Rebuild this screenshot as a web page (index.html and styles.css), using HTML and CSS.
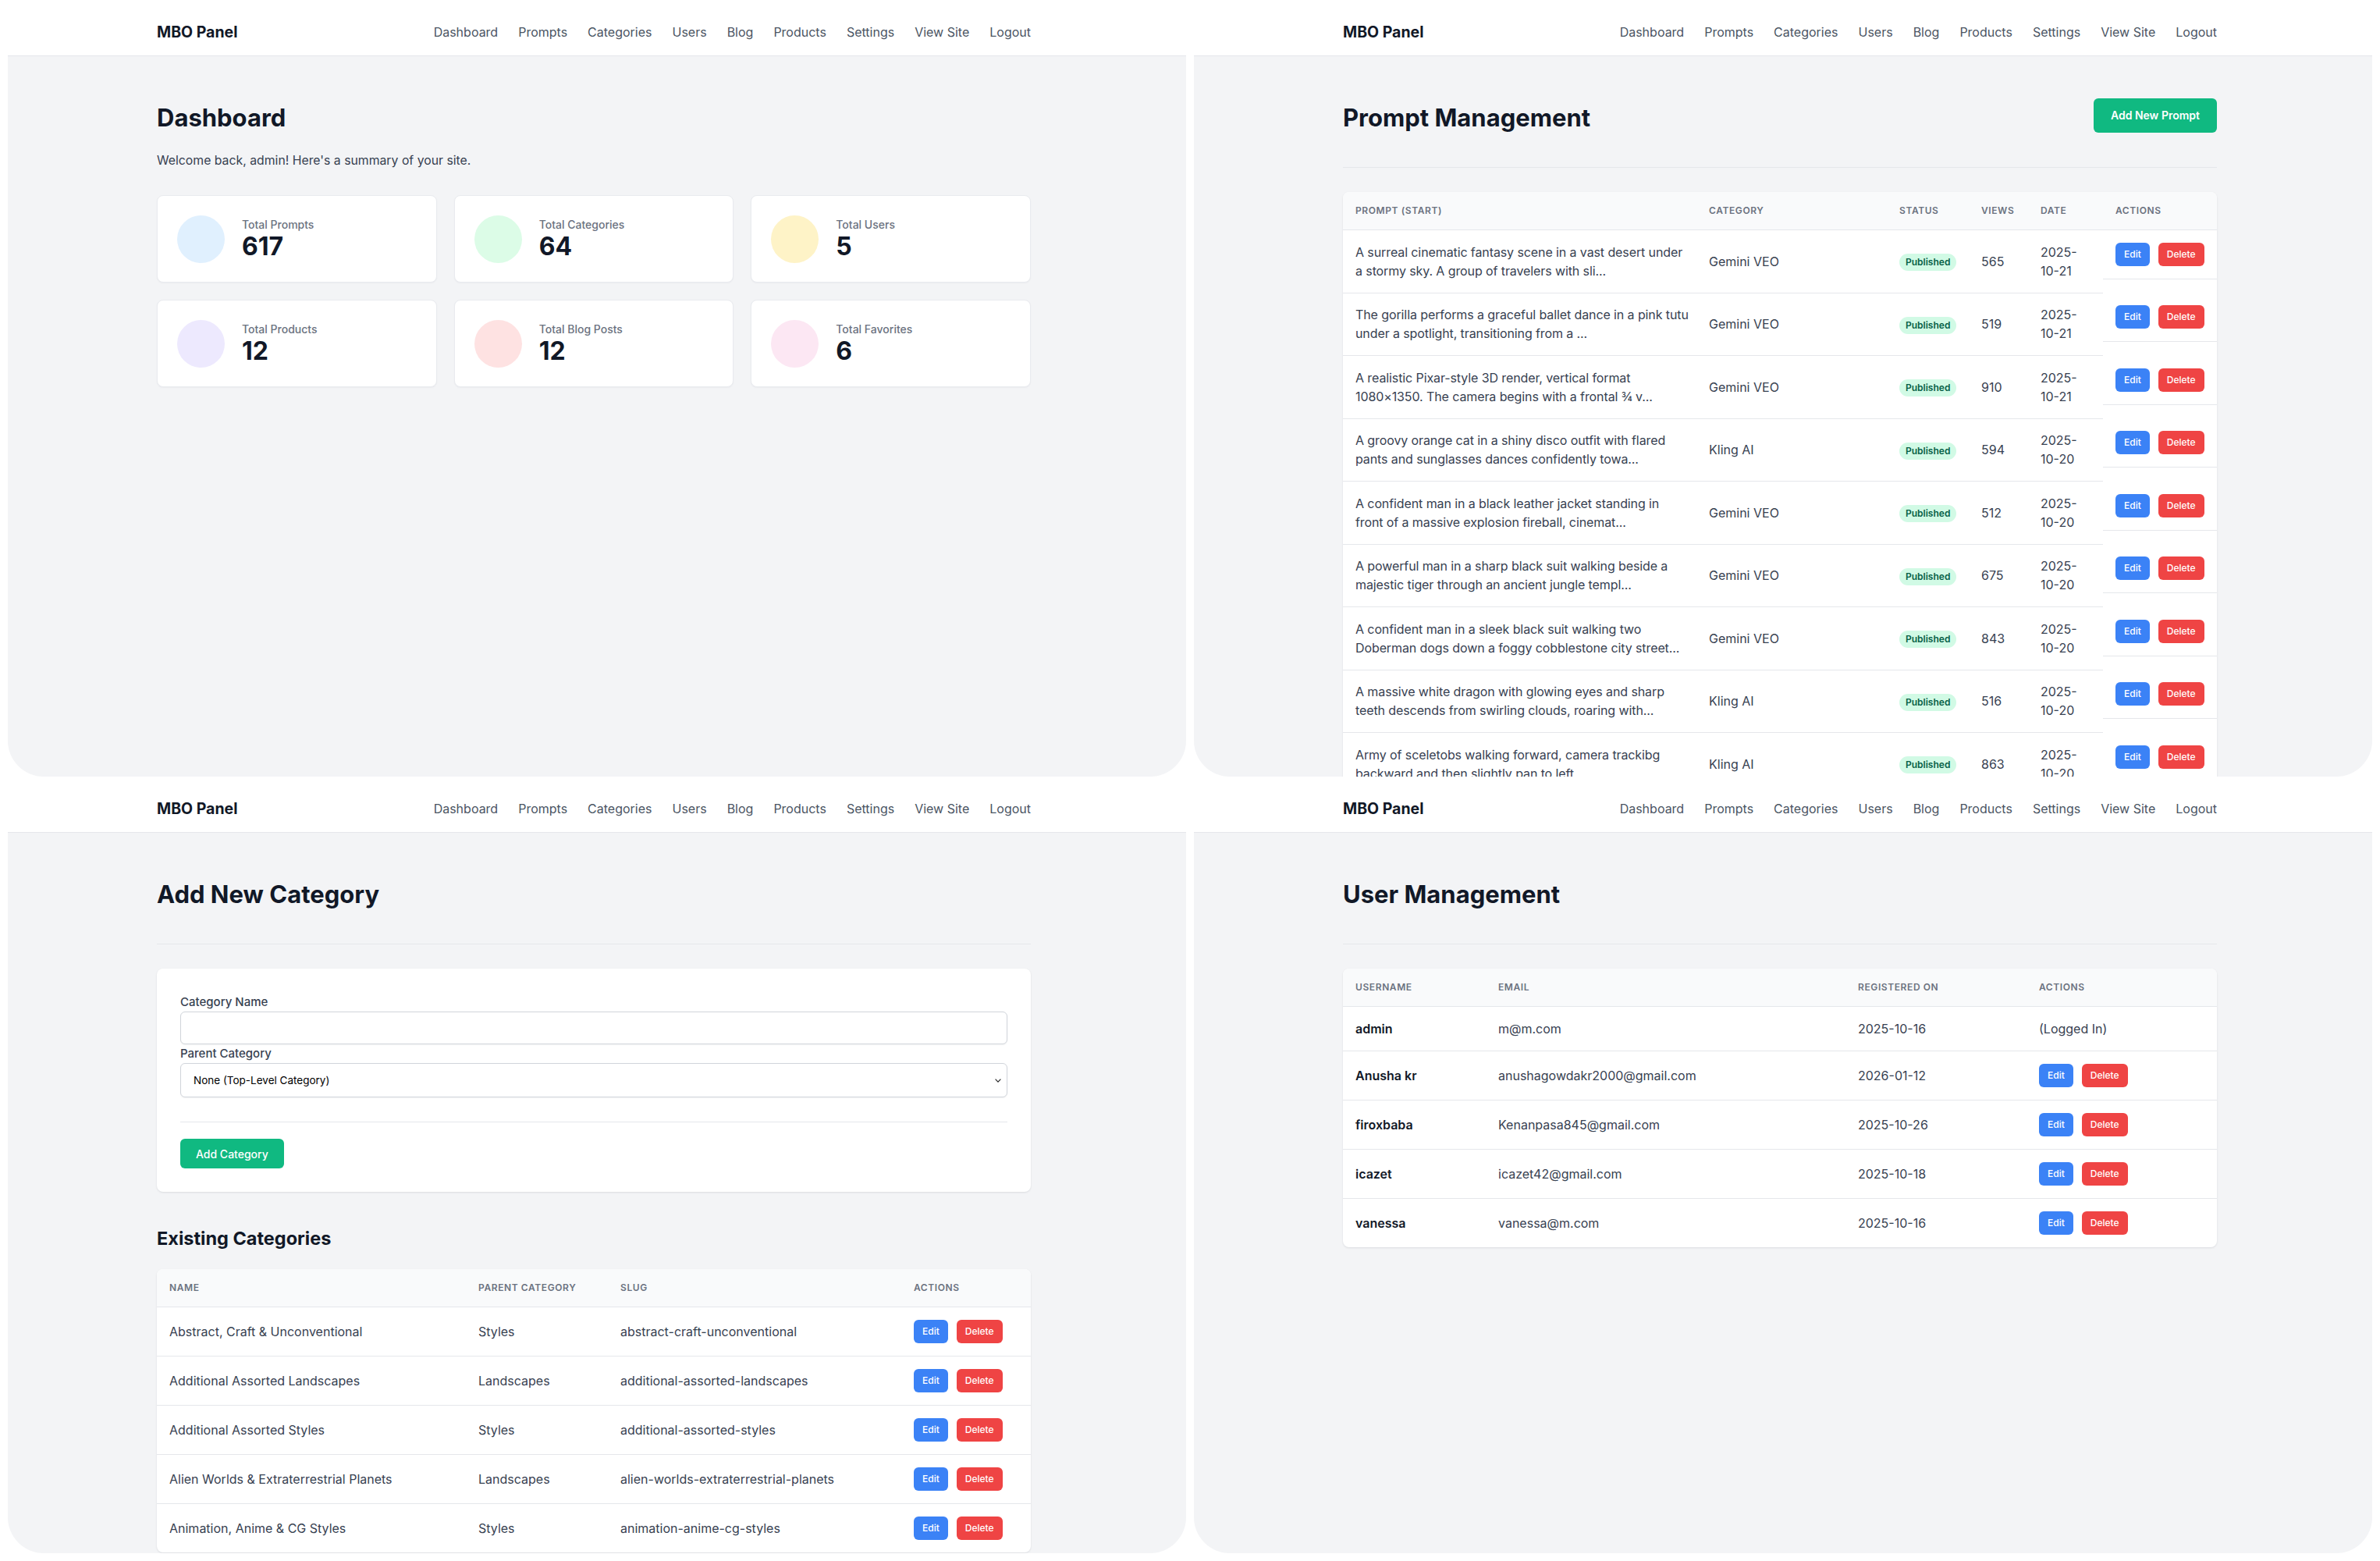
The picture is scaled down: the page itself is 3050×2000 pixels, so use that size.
FILE: index.html
```html
<!DOCTYPE html>
<html lang="en">
<head>
<meta charset="utf-8">
<title>MBO Panel</title>
<link rel="stylesheet" href="styles.css">
</head>
<body>
<div class="board">

  <!-- Dashboard -->
  <section class="panel">
    <header class="topbar">
      <div class="wrap bar">
        <span class="brand">MBO Panel</span>
        <nav class="menu">
          <a href="#">Dashboard</a><a href="#">Prompts</a><a href="#">Categories</a><a href="#">Users</a><a href="#">Blog</a><a href="#">Products</a><a href="#">Settings</a><a href="#">View Site</a><a href="#">Logout</a>
        </nav>
      </div>
    </header>
    <main class="wrap content">
      <div class="page-head"><h1>Dashboard</h1></div>
      <p class="intro">Welcome back, admin! Here's a summary of your site.</p>
      <div class="stats">
        <div class="stat"><span class="dot dot-blue"></span><div><div class="stat-label">Total Prompts</div><div class="stat-value">617</div></div></div>
        <div class="stat"><span class="dot dot-green"></span><div><div class="stat-label">Total Categories</div><div class="stat-value">64</div></div></div>
        <div class="stat"><span class="dot dot-yellow"></span><div><div class="stat-label">Total Users</div><div class="stat-value">5</div></div></div>
        <div class="stat"><span class="dot dot-purple"></span><div><div class="stat-label">Total Products</div><div class="stat-value">12</div></div></div>
        <div class="stat"><span class="dot dot-red"></span><div><div class="stat-label">Total Blog Posts</div><div class="stat-value">12</div></div></div>
        <div class="stat"><span class="dot dot-pink"></span><div><div class="stat-label">Total Favorites</div><div class="stat-value">6</div></div></div>
      </div>
    </main>
  </section>

  <!-- Prompt management -->
  <section class="panel">
    <header class="topbar">
      <div class="wrap bar">
        <span class="brand">MBO Panel</span>
        <nav class="menu">
          <a href="#">Dashboard</a><a href="#">Prompts</a><a href="#">Categories</a><a href="#">Users</a><a href="#">Blog</a><a href="#">Products</a><a href="#">Settings</a><a href="#">View Site</a><a href="#">Logout</a>
        </nav>
      </div>
    </header>
    <main class="wrap content">
      <div class="page-head"><h1>Prompt Management</h1><a class="btn-primary" href="#">Add New Prompt</a></div>
      <div class="rule"></div>
      <div class="table-card">
        <table class="grid-table prompts">
          <colgroup><col class="p-text"><col class="p-cat"><col class="p-status"><col class="p-views"><col class="p-date"><col class="p-act"></colgroup>
          <thead><tr><th>Prompt (Start)</th><th>Category</th><th>Status</th><th>Views</th><th>Date</th><th>Actions</th></tr></thead>
          <tbody>
            <tr><td class="preview">A surreal cinematic fantasy scene in a vast desert under<br>a stormy sky. A group of travelers with sli...</td><td>Gemini VEO</td><td><span class="badge">Published</span></td><td>565</td><td>2025-10-21</td><td class="actions"><a class="btn-sm edit" href="#">Edit</a><a class="btn-sm delete" href="#">Delete</a></td></tr>
            <tr><td class="preview">The gorilla performs a graceful ballet dance in a pink tutu<br>under a spotlight, transitioning from a ...</td><td>Gemini VEO</td><td><span class="badge">Published</span></td><td>519</td><td>2025-10-21</td><td class="actions"><a class="btn-sm edit" href="#">Edit</a><a class="btn-sm delete" href="#">Delete</a></td></tr>
            <tr><td class="preview">A realistic Pixar-style 3D render, vertical format<br>1080×1350. The camera begins with a frontal ¾ v...</td><td>Gemini VEO</td><td><span class="badge">Published</span></td><td>910</td><td>2025-10-21</td><td class="actions"><a class="btn-sm edit" href="#">Edit</a><a class="btn-sm delete" href="#">Delete</a></td></tr>
            <tr><td class="preview">A groovy orange cat in a shiny disco outfit with flared<br>pants and sunglasses dances confidently towa...</td><td>Kling AI</td><td><span class="badge">Published</span></td><td>594</td><td>2025-10-20</td><td class="actions"><a class="btn-sm edit" href="#">Edit</a><a class="btn-sm delete" href="#">Delete</a></td></tr>
            <tr><td class="preview">A confident man in a black leather jacket standing in<br>front of a massive explosion fireball, cinemat...</td><td>Gemini VEO</td><td><span class="badge">Published</span></td><td>512</td><td>2025-10-20</td><td class="actions"><a class="btn-sm edit" href="#">Edit</a><a class="btn-sm delete" href="#">Delete</a></td></tr>
            <tr><td class="preview">A powerful man in a sharp black suit walking beside a<br>majestic tiger through an ancient jungle templ...</td><td>Gemini VEO</td><td><span class="badge">Published</span></td><td>675</td><td>2025-10-20</td><td class="actions"><a class="btn-sm edit" href="#">Edit</a><a class="btn-sm delete" href="#">Delete</a></td></tr>
            <tr><td class="preview">A confident man in a sleek black suit walking two<br>Doberman dogs down a foggy cobblestone city street...</td><td>Gemini VEO</td><td><span class="badge">Published</span></td><td>843</td><td>2025-10-20</td><td class="actions"><a class="btn-sm edit" href="#">Edit</a><a class="btn-sm delete" href="#">Delete</a></td></tr>
            <tr><td class="preview">A massive white dragon with glowing eyes and sharp<br>teeth descends from swirling clouds, roaring with...</td><td>Kling AI</td><td><span class="badge">Published</span></td><td>516</td><td>2025-10-20</td><td class="actions"><a class="btn-sm edit" href="#">Edit</a><a class="btn-sm delete" href="#">Delete</a></td></tr>
            <tr><td class="preview">Army of sceletobs walking forward, camera trackibg<br>backward and then slightly pan to left</td><td>Kling AI</td><td><span class="badge">Published</span></td><td>863</td><td>2025-10-20</td><td class="actions"><a class="btn-sm edit" href="#">Edit</a><a class="btn-sm delete" href="#">Delete</a></td></tr>
          </tbody>
        </table>
      </div>
    </main>
  </section>

  <!-- Categories -->
  <section class="panel">
    <header class="topbar">
      <div class="wrap bar">
        <span class="brand">MBO Panel</span>
        <nav class="menu">
          <a href="#">Dashboard</a><a href="#">Prompts</a><a href="#">Categories</a><a href="#">Users</a><a href="#">Blog</a><a href="#">Products</a><a href="#">Settings</a><a href="#">View Site</a><a href="#">Logout</a>
        </nav>
      </div>
    </header>
    <main class="wrap content">
      <div class="page-head"><h1>Add New Category</h1></div>
      <div class="rule"></div>
      <form class="form-card">
        <label class="field-label" for="cat-name">Category Name</label>
        <input class="field" id="cat-name" type="text">
        <label class="field-label" for="cat-parent">Parent Category</label>
        <div class="select-box">
          <select class="field select" id="cat-parent"><option>None (Top-Level Category)</option></select>
          <svg class="chev" width="8" height="5" viewBox="0 0 8 5"><polyline points="0.6,0.6 4,4.2 7.4,0.6" fill="none" stroke="#222" stroke-width="1.1"/></svg>
        </div>
        <hr class="form-sep">
        <button class="btn-add" type="button">Add Category</button>
      </form>
      <h2 class="section-title">Existing Categories</h2>
      <div class="table-card">
        <table class="grid-table cats">
          <colgroup><col class="c-name"><col class="c-parent"><col class="c-slug"><col class="c-act"></colgroup>
          <thead><tr><th>Name</th><th>Parent Category</th><th>Slug</th><th>Actions</th></tr></thead>
          <tbody>
            <tr><td>Abstract, Craft &amp; Unconventional</td><td>Styles</td><td>abstract-craft-unconventional</td><td class="actions"><a class="btn-sm edit" href="#">Edit</a><a class="btn-sm delete" href="#">Delete</a></td></tr>
            <tr><td>Additional Assorted Landscapes</td><td>Landscapes</td><td>additional-assorted-landscapes</td><td class="actions"><a class="btn-sm edit" href="#">Edit</a><a class="btn-sm delete" href="#">Delete</a></td></tr>
            <tr><td>Additional Assorted Styles</td><td>Styles</td><td>additional-assorted-styles</td><td class="actions"><a class="btn-sm edit" href="#">Edit</a><a class="btn-sm delete" href="#">Delete</a></td></tr>
            <tr><td>Alien Worlds &amp; Extraterrestrial Planets</td><td>Landscapes</td><td>alien-worlds-extraterrestrial-planets</td><td class="actions"><a class="btn-sm edit" href="#">Edit</a><a class="btn-sm delete" href="#">Delete</a></td></tr>
            <tr><td>Animation, Anime &amp; CG Styles</td><td>Styles</td><td>animation-anime-cg-styles</td><td class="actions"><a class="btn-sm edit" href="#">Edit</a><a class="btn-sm delete" href="#">Delete</a></td></tr>
          </tbody>
        </table>
      </div>
    </main>
  </section>

  <!-- Users -->
  <section class="panel">
    <header class="topbar">
      <div class="wrap bar">
        <span class="brand">MBO Panel</span>
        <nav class="menu">
          <a href="#">Dashboard</a><a href="#">Prompts</a><a href="#">Categories</a><a href="#">Users</a><a href="#">Blog</a><a href="#">Products</a><a href="#">Settings</a><a href="#">View Site</a><a href="#">Logout</a>
        </nav>
      </div>
    </header>
    <main class="wrap content">
      <div class="page-head"><h1>User Management</h1></div>
      <div class="rule"></div>
      <div class="table-card">
        <table class="grid-table users">
          <colgroup><col class="u-name"><col class="u-mail"><col class="u-date"><col class="u-act"></colgroup>
          <thead><tr><th>Username</th><th>Email</th><th>Registered On</th><th>Actions</th></tr></thead>
          <tbody>
            <tr><td class="uname">admin</td><td>m@m.com</td><td>2025-10-16</td><td class="actions">(Logged In)</td></tr>
            <tr><td class="uname">Anusha kr</td><td>anushagowdakr2000@gmail.com</td><td>2026-01-12</td><td class="actions"><a class="btn-sm edit" href="#">Edit</a><a class="btn-sm delete" href="#">Delete</a></td></tr>
            <tr><td class="uname">firoxbaba</td><td>Kenanpasa845@gmail.com</td><td>2025-10-26</td><td class="actions"><a class="btn-sm edit" href="#">Edit</a><a class="btn-sm delete" href="#">Delete</a></td></tr>
            <tr><td class="uname">icazet</td><td>icazet42@gmail.com</td><td>2025-10-18</td><td class="actions"><a class="btn-sm edit" href="#">Edit</a><a class="btn-sm delete" href="#">Delete</a></td></tr>
            <tr><td class="uname">vanessa</td><td>vanessa@m.com</td><td>2025-10-16</td><td class="actions"><a class="btn-sm edit" href="#">Edit</a><a class="btn-sm delete" href="#">Delete</a></td></tr>
          </tbody>
        </table>
      </div>
    </main>
  </section>

</div>
</body>
</html>
```
FILE: styles.css
```css
* { box-sizing: border-box; }

html, body {
  margin: 0;
  background: #ffffff;
  font-family: Inter, "Noto Sans", "Liberation Sans", sans-serif;
  color: #111827;
}

/* four admin screens in a 2 x 2 grid */
.board {
  width: 3050px;
  height: 2000px;
  padding-left: 10px;
  display: grid;
  grid-template-columns: 1510px 1510px;
  grid-template-rows: 995px 995px;
  column-gap: 10px;
}

.panel {
  background: #f3f4f6;
  border-radius: 0 0 46px 46px;
  overflow: hidden;
}

.wrap {
  width: 1120px;
  margin-left: 191px;
}

/* top navigation */
.topbar {
  height: 72px;
  padding-top: 11px;
  background: #ffffff;
  border-bottom: 1px solid #e5e7eb;
}

.bar {
  height: 60px;
  display: flex;
  align-items: center;
  justify-content: space-between;
}

.brand {
  font-size: 19.5px;
  font-weight: 700;
  color: #111827;
}

.menu {
  display: flex;
  gap: 26px;
}

.menu a {
  font-size: 16px;
  line-height: 24px;
  color: #4b5563;
  text-decoration: none;
}

/* page body */
.content {
  padding-top: 54px;
}

.page-head {
  min-height: 44px;
  display: flex;
  align-items: center;
  justify-content: space-between;
}

h1 {
  margin: 0;
  padding-top: 6px;
  font-size: 31px;
  line-height: 36px;
  font-weight: 700;
  color: #111827;
}

.btn-primary {
  height: 44px;
  padding: 0 22px;
  border-radius: 6px;
  background: #10b981;
  color: #ffffff;
  font-size: 14px;
  line-height: 44px;
  font-weight: 600;
  text-decoration: none;
}

.rule {
  height: 1px;
  background: #e5e7eb;
  margin: 44px 0 31px;
}

/* dashboard */
.intro {
  margin: 24px 0 0;
  font-size: 15.8px;
  line-height: 24px;
  color: #374151;
}

.stats {
  margin-top: 32px;
  display: grid;
  grid-template-columns: repeat(3, 1fr);
  gap: 22px;
}

.stat {
  height: 112px;
  padding: 0 25px;
  display: flex;
  align-items: center;
  background: #ffffff;
  border: 1px solid #e9ebef;
  border-radius: 8px;
  box-shadow: 0 1px 2px rgba(16, 24, 40, 0.04);
}

.dot {
  flex: none;
  width: 61px;
  height: 61px;
  border-radius: 50%;
  margin-right: 22px;
}

.dot-blue { background: #e0f0fe; }
.dot-green { background: #dcfce7; }
.dot-yellow { background: #fef3c7; }
.dot-purple { background: #ede9fe; }
.dot-red { background: #fee2e2; }
.dot-pink { background: #fce7f3; }

.stat-label {
  font-size: 14px;
  line-height: 20px;
  font-weight: 500;
  color: #6b7280;
}

.stat-value {
  font-size: 32px;
  line-height: 36px;
  font-weight: 700;
  color: #111827;
}

/* tables */
.table-card {
  background: #ffffff;
  border-radius: 8px;
  overflow: hidden;
  box-shadow: 0 1px 3px rgba(16, 24, 40, 0.07), 0 1px 2px rgba(16, 24, 40, 0.04);
}

.grid-table {
  width: 100%;
  table-layout: fixed;
  border-collapse: separate;
  border-spacing: 0;
}

.grid-table th {
  padding: 12px 16px;
  background: #f9fafb;
  border-bottom: 1px solid #e5e7eb;
  text-align: left;
  font-size: 12px;
  line-height: 24px;
  font-weight: 600;
  letter-spacing: 0.05em;
  text-transform: uppercase;
  color: #6b7280;
}

.grid-table td {
  padding: 16px;
  border-bottom: 1px solid #e5e7eb;
  font-size: 16px;
  line-height: 24px;
  color: #374151;
}

.prompts td {
  padding-top: 15.75px;
  padding-bottom: 15.75px;
}

.grid-table td.preview {
  white-space: nowrap;
  letter-spacing: -0.1px;
}

.grid-table tbody tr:last-child td { border-bottom: 0; }

.grid-table td.actions {
  display: flex;
  gap: 11px;
}

.grid-table td.uname {
  font-weight: 600;
  color: #111827;
}

.p-text { width: 453px; }
.p-cat { width: 244px; }
.p-status { width: 105px; }
.p-views { width: 76px; }
.p-date { width: 96px; }
.p-act { width: 146px; }

.c-name { width: 396px; }
.c-parent { width: 182px; }
.c-slug { width: 376px; }
.c-act { width: 166px; }

.u-name { width: 183px; }
.u-mail { width: 461px; }
.u-date { width: 232px; }
.u-act { width: 244px; }

.badge {
  display: inline-block;
  padding: 0 8px;
  border-radius: 999px;
  background: #d1fae5;
  color: #065f46;
  font-size: 12px;
  line-height: 22px;
  font-weight: 600;
  white-space: nowrap;
}

.btn-sm {
  display: inline-block;
  height: 30px;
  padding: 0 11px;
  border-radius: 6px;
  color: #ffffff;
  font-size: 12px;
  line-height: 30px;
  font-weight: 500;
  text-decoration: none;
}

.edit { background: #3b82f6; }
.delete { background: #ef4444; }

/* category form */
.form-card {
  margin: 0;
  padding: 31px 30px 30px;
  background: #ffffff;
  border-radius: 8px;
  box-shadow: 0 1px 3px rgba(16, 24, 40, 0.07), 0 1px 2px rgba(16, 24, 40, 0.04);
}

.field-label {
  display: block;
  font-size: 15px;
  line-height: 24px;
  font-weight: 500;
  color: #374151;
}

.field {
  display: block;
  width: 100%;
  height: 42px;
  margin: 0;
  background: #ffffff;
  border: 1px solid #d1d5db;
  border-radius: 6px;
  box-shadow: 0 1px 2px rgba(0, 0, 0, 0.05);
  font-family: inherit;
}

.select-box {
  position: relative;
}

.select {
  height: 44px;
  padding: 0 16px;
  appearance: none;
  -webkit-appearance: none;
  font-size: 13.5px;
  color: #000000;
}

.chev {
  position: absolute;
  right: 8px;
  top: 20px;
}

.form-sep {
  height: 1px;
  margin: 31px 0 21px;
  border: 0;
  background: #e5e7eb;
}

.btn-add {
  height: 38px;
  padding: 0 20px;
  border: 0;
  border-radius: 6px;
  background: #10b981;
  color: #ffffff;
  font-family: inherit;
  font-size: 14px;
  font-weight: 500;
}

.section-title {
  margin: 44px 0 23px;
  font-size: 23.5px;
  line-height: 32px;
  font-weight: 700;
  color: #111827;
}
```
